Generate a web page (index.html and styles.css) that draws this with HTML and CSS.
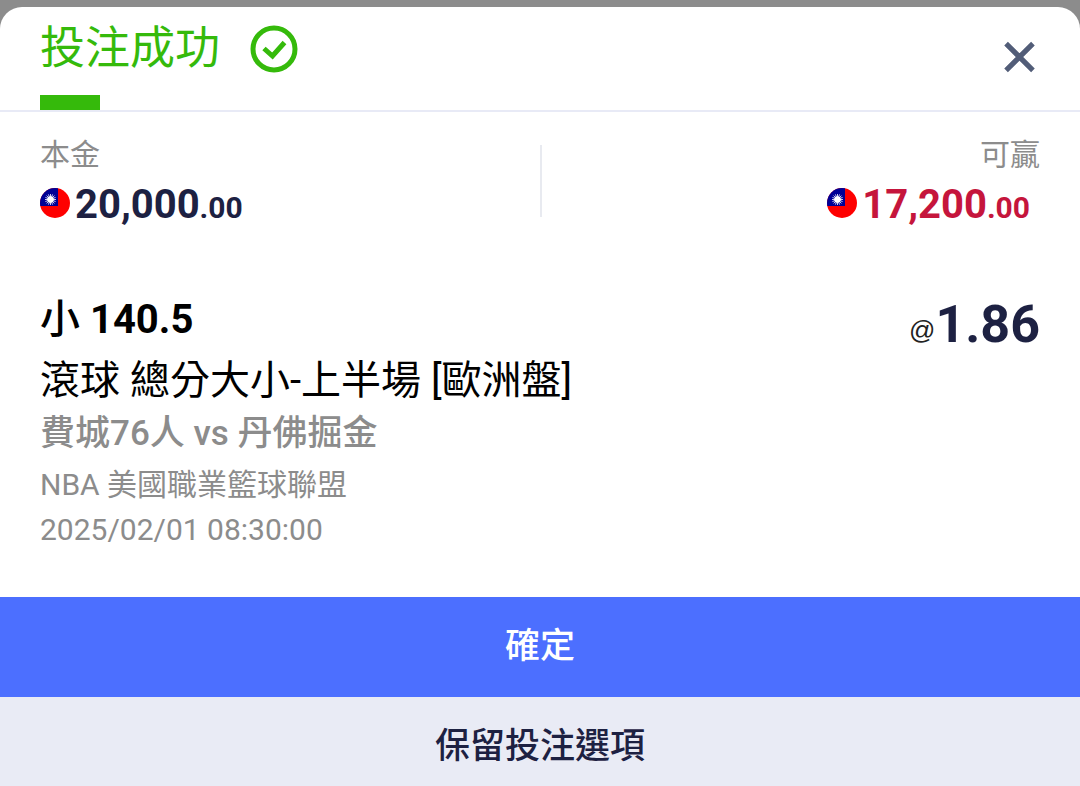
FILE: index.html
```html
<!DOCTYPE html>
<html lang="zh-Hant">
<head>
  <meta charset="UTF-8">
  <meta name="viewport" content="width=device-width, initial-scale=1.0">
  <title>投注成功</title>
  <link rel="stylesheet" href="styles.css">
</head>
<body>

  <!-- flag shared by both amounts -->
  <svg class="defs" width="0" height="0" aria-hidden="true">
    <symbol id="flag-tw" viewBox="0 0 30 30">
      <clipPath id="flag-round"><circle cx="15" cy="15" r="15"/></clipPath>
      <g clip-path="url(#flag-round)">
        <rect width="30" height="30" fill="#fe0000"/>
        <rect width="18" height="18" fill="#000095"/>
        <path d="M10.5 6v11M5 11.5h11M6.6 7.6l7.8 7.8M14.4 7.6l-7.8 7.8M8.4 6.4l4.2 10.2M12.6 6.4l-4.2 10.2M5.4 9.4l10.2 4.2M5.4 13.6l10.2-4.2" stroke="#fff" stroke-width=".8"/>
        <circle cx="10.5" cy="11.5" r="3.2" fill="#fff"/>
      </g>
    </symbol>
  </svg>

  <main class="sheet">
    <header class="sheet-header">
      <h1 class="title">投注成功
        <svg class="icon-check" viewBox="0 0 48 48" fill="none" stroke="currentColor" aria-hidden="true">
          <circle cx="24" cy="24" r="21" stroke-width="5"/>
          <path d="M14 23.5l8.5 7.5L34.5 17.5" stroke-width="5"/>
        </svg>
      </h1>
      <button type="button" class="btn-close" aria-label="關閉">
        <svg viewBox="0 0 30 30" fill="none" stroke="currentColor" stroke-width="5" aria-hidden="true">
          <path d="M2 2l26 26M28 2L2 28"/>
        </svg>
      </button>
    </header>

    <section class="amounts">
      <div class="amount-box">
        <p class="label">本金</p>
        <p class="amount"><svg class="flag" aria-hidden="true"><use href="#flag-tw"/></svg><span>20,000<small>.00</small></span></p>
      </div>
      <div class="amount-box win">
        <p class="label">可贏</p>
        <p class="amount"><svg class="flag" aria-hidden="true"><use href="#flag-tw"/></svg><span>17,200<small>.00</small></span></p>
      </div>
    </section>

    <section class="bet">
      <div class="bet-info">
        <h2 class="pick"><span class="side">小</span> 140.5</h2>
        <p class="market">滾球 總分大小-上半場 [歐洲盤]</p>
        <p class="teams">費城76人 vs 丹佛掘金</p>
        <p class="league">NBA 美國職業籃球聯盟</p>
        <p class="league">2025/02/01 08:30:00</p>
      </div>
      <p class="odds"><span class="at">@</span><span>1.86</span></p>
    </section>

    <footer class="actions">
      <button type="button" class="btn btn-confirm">確定</button>
      <button type="button" class="btn btn-keep">保留投注選項</button>
    </footer>
  </main>

</body>
</html>
```
FILE: styles.css
```css
* {
  box-sizing: border-box;
}

body {
  margin: 0;
  padding-top: 7px;
  min-height: 100vh;
  display: flex;
  flex-direction: column;
  background-color: #8c8c8c;
  font-family: Roboto, "Noto Sans CJK TC", sans-serif;
}

h1, h2, p {
  margin: 0;
  font-weight: 400;
}

button {
  font-family: inherit;
  border: none;
  cursor: pointer;
}

.defs {
  position: absolute;
}

.sheet {
  flex: 1;
  display: flex;
  flex-direction: column;
  background-color: #fff;
  border-radius: 22px 22px 0 0;
  overflow: hidden;
}

.sheet-header {
  display: flex;
  flex-wrap: wrap;
  justify-content: space-between;
  align-items: flex-start;
  padding: 0 40px;
  border-bottom: 2px solid #e8eaf6;
}

/* short green tab under the title */
.sheet-header::after {
  content: "";
  flex: 0 0 60px;
  height: 15px;
  margin: 4px 100% 0 0;
  background-color: #35ba0b;
}

.title {
  display: flex;
  align-items: center;
  gap: 30px;
  font-size: 45px;
  line-height: 84px;
  color: #35ba0b;
}

.icon-check {
  width: 48px;
  height: 48px;
}

.btn-close {
  display: flex;
  margin-top: 34px;
  padding: 0 5px;
  background: none;
  color: #525d78;
}

.btn-close svg {
  width: 31px;
  height: 32px;
}

.amounts {
  display: flex;
  padding: 24px 40px 0;
}

.amount-box {
  flex: 1;
  color: #1d2142;
}

.label {
  font-size: 30px;
  line-height: 38px;
  color: #8c8c8c;
}

.amount {
  display: flex;
  align-items: center;
  gap: 5px;
  font-size: 40px;
  line-height: 62px;
  font-weight: 700;
}

.amount small {
  font-size: 30px;
}

.flag {
  width: 30px;
  height: 30px;
  margin-bottom: 8px;
}

.win {
  display: flex;
  flex-direction: column;
  align-items: flex-end;
  color: #c5153c;
  background: linear-gradient(#e8eaf0, #e8eaf0) no-repeat 0 9px / 2px 72px;
}

.win .amount {
  padding-right: 10px;
}

.bet {
  display: flex;
  justify-content: space-between;
  align-items: flex-start;
  flex: 1;
  padding: 51px 40px 40px;
}

.pick {
  font-size: 40px;
  line-height: 60px;
  font-weight: 700;
  color: #000;
}

.side {
  font-weight: 500;
}

.market {
  font-size: 40px;
  line-height: 62px;
  color: #000;
}

.teams {
  font-size: 35px;
  line-height: 44px;
  font-weight: 500;
  color: #8c8c8c;
}

.league {
  font-size: 30px;
  line-height: 45px;
  color: #8c8c8c;
}

.teams + .league {
  padding-top: 6px;
}

.odds {
  display: flex;
  align-items: center;
  font-size: 52px;
  line-height: 60px;
  font-weight: 700;
  color: #1d2142;
}

.at {
  padding-top: 10px;
  font-family: "Liberation Sans", sans-serif;
  font-size: 26px;
  font-weight: 400;
  color: #222;
}

.actions {
  display: flex;
  flex-direction: column;
}

.btn {
  padding: 0;
  font-size: 35px;
  font-weight: 500;
}

.btn-confirm {
  line-height: 100px;
  background-color: #4c6fff;
  color: #fff;
}

.btn-keep {
  padding-top: 11px;
  line-height: 78px;
  background-color: #e9ebf5;
  color: #1d2142;
}
```
